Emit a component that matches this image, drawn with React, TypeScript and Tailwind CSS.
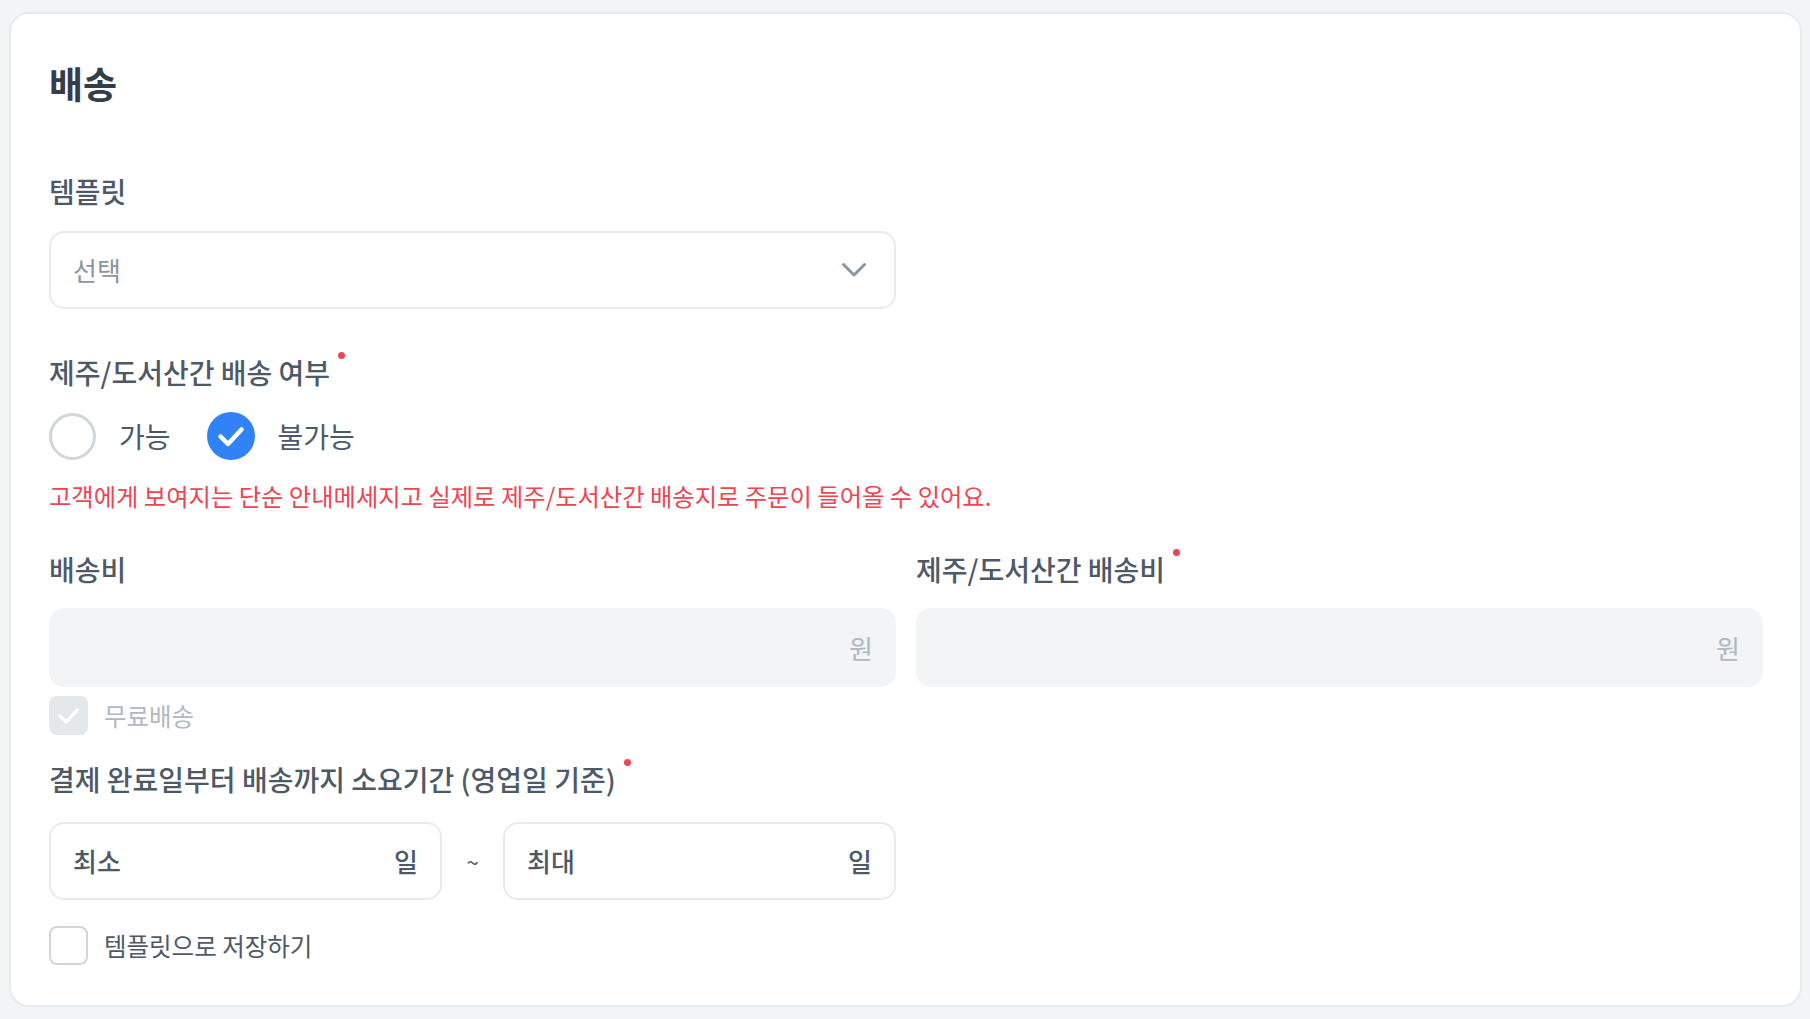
import React from 'react';

function RequiredDot() {
  return <span className="ml-[8px] -mt-[4px] h-[7px] w-[7px] shrink-0 rounded-full bg-[#f04452]" />;
}

function FieldLabel({ text, required }: { text: string; required?: boolean }) {
  return (
    <div className="flex items-start text-[28px] leading-[32px] font-medium text-[#4e5968]">
      <span>{text}</span>
      {required && <RequiredDot />}
    </div>
  );
}

function CheckMark({ size, color, width }: { size: number; color: string; width: number }) {
  return (
    <svg width={size} height={size} viewBox="0 0 48 48" fill="none">
      <path d="M13.5 24.5 L21 32 L34.5 17.5" stroke={color} strokeWidth={width} strokeLinecap="round" strokeLinejoin="round" />
    </svg>
  );
}

function FeeInput() {
  return (
    <div className="flex h-[79px] items-center justify-end rounded-[15px] bg-[#f2f4f6] pr-[23px]">
      <span className="text-[26px] leading-[32px] text-[#b0b8c1]">원</span>
    </div>
  );
}

function DayInput({ placeholder }: { placeholder: string }) {
  return (
    <div className="flex h-[78px] flex-1 items-center justify-between rounded-[15px] border-2 border-[#e8ebee] bg-white pl-[22px] pr-[22px]">
      <span className="text-[26px] leading-[32px] font-medium text-[#4e5968]">{placeholder}</span>
      <span className="text-[26px] leading-[32px] font-medium text-[#4e5968]">일</span>
    </div>
  );
}

export default function App() {
  return (
    <div className="min-h-screen bg-[#f2f4f6] pt-[12px] pr-[8px] pb-[12px] pl-[9px] font-['Noto_Sans_CJK_KR','Noto_Sans',sans-serif]">
      <div className="rounded-[20px] border-2 border-[#e8ebee] bg-white pt-[47px] pr-[37px] pb-[40px] pl-[38px]">
        <h1 className="text-[37px] leading-[44px] font-bold text-[#333d4b]">배송</h1>

        <div className="mt-[70px]">
          <FieldLabel text="템플릿" />
        </div>
        <div className="mt-[24px] flex h-[78px] w-[847px] items-center justify-between rounded-[15px] border-2 border-[#e8ebee] pr-[27px] pl-[22px]">
          <span className="text-[26px] leading-[32px] text-[#8b95a1]">선택</span>
          <svg width="26" height="16" viewBox="0 0 26 16" fill="none">
            <path d="M2.5 2.5 L13 13 L23.5 2.5" stroke="#8b95a1" strokeWidth="3" strokeLinecap="round" strokeLinejoin="round" />
          </svg>
        </div>

        <div className="mt-[47px]">
          <FieldLabel text="제주/도서산간 배송 여부" required />
        </div>
        <div className="mt-[24px] flex h-[48px] items-center">
          <span className="h-[47px] w-[47px] rounded-full border-[3px] border-[#d1d6db] bg-white" />
          <span className="ml-[23px] text-[28px] leading-[32px] text-[#4e5968]">가능</span>
          <span className="ml-[36px] flex h-[48px] w-[48px] items-center justify-center rounded-full bg-[#3182f6]">
            <CheckMark size={48} color="#ffffff" width={4.5} />
          </span>
          <span className="ml-[23px] text-[28px] leading-[32px] text-[#4e5968]">불가능</span>
        </div>
        <p className="mt-[21px] text-[24.3px] leading-[30px] text-[#f04452]">
          고객에게 보여지는 단순 안내메세지고 실제로 제주/도서산간 배송지로 주문이 들어올 수 있어요.
        </p>

        <div className="mt-[42px] grid grid-cols-2 gap-x-[20px]">
          <div>
            <FieldLabel text="배송비" />
            <div className="mt-[23px]">
              <FeeInput />
            </div>
          </div>
          <div>
            <FieldLabel text="제주/도서산간 배송비" required />
            <div className="mt-[23px]">
              <FeeInput />
            </div>
          </div>
        </div>
        <div className="mt-[9px] flex h-[39px] items-center">
          <span className="flex h-[39px] w-[39px] items-center justify-center rounded-[8px] bg-[#e5e8eb]">
            <CheckMark size={39} color="#ffffff" width={4} />
          </span>
          <span className="ml-[16px] text-[24.5px] leading-[30px] text-[#b0b8c1]">무료배송</span>
        </div>

        <div className="mt-[28px]">
          <FieldLabel text="결제 완료일부터 배송까지 소요기간 (영업일 기준)" required />
        </div>
        <div className="mt-[27px] flex w-[847px] items-center">
          <DayInput placeholder="최소" />
          <span className="w-[61px] text-center text-[22px] leading-[30px] text-[#4e5968]">~</span>
          <DayInput placeholder="최대" />
        </div>

        <div className="mt-[26px] flex h-[39px] items-center">
          <span className="h-[39px] w-[39px] rounded-[8px] border-2 border-[#d1d6db] bg-white" />
          <span className="ml-[16px] text-[24.5px] leading-[30px] text-[#4e5968]">템플릿으로 저장하기</span>
        </div>
      </div>
    </div>
  );
}
